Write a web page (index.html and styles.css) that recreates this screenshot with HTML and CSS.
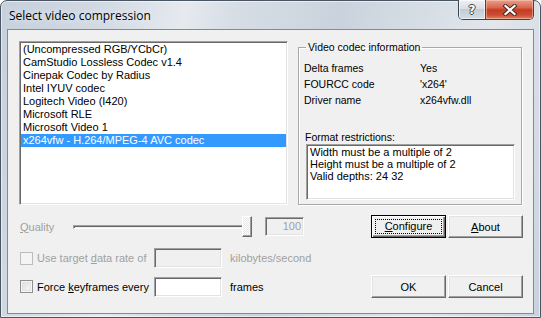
FILE: index.html
```html
<!DOCTYPE html>
<html>
  <head>
    <link rel="stylesheet" href="styles.css">
  </head>
  <body>
    <div class="window">
      <div class="titlebar">
        <span class="title">Select video compression</span>
        <div class="caption-btns">
          <div class="cap help"><span>?</span></div>
          <div class="cap close">
            <svg width="16" height="12" viewBox="0 0 16 12">
              <path d="M3.5 2 L12.5 10 M12.5 2 L3.5 10" stroke="#4a2a24" stroke-width="4.2" stroke-linecap="square"/>
              <path d="M3.5 2 L12.5 10 M12.5 2 L3.5 10" stroke="#fff" stroke-width="2.2" stroke-linecap="square"/>
            </svg>
          </div>
        </div>
      </div>

      <div class="client">
        <div class="top">
          <ul class="listbox sunken">
            <li>(Uncompressed RGB/YCbCr)</li>
            <li>CamStudio Lossless Codec v1.4</li>
            <li>Cinepak Codec by Radius</li>
            <li>Intel IYUV codec</li>
            <li>Logitech Video (I420)</li>
            <li>Microsoft RLE</li>
            <li>Microsoft Video 1</li>
            <li class="selected">x264vfw - H.264/MPEG-4 AVC codec</li>
          </ul>

          <fieldset class="group">
            <legend>Video codec information</legend>
            <div class="info">
              <span>Delta frames</span><span>Yes</span>
              <span>FOURCC code</span><span>'x264'</span>
              <span>Driver name</span><span>x264vfw.dll</span>
            </div>
            <div class="restr-label">Format restrictions:</div>
            <div class="restr-box sunken">
              Width must be a multiple of 2<br>
              Height must be a multiple of 2<br>
              Valid depths: 24 32
            </div>
          </fieldset>
        </div>

        <div class="row row-quality">
          <div class="left">
            <span class="quality-lbl disabled"><u>Q</u>uality</span>
            <div class="slider">
              <div class="track"></div>
              <div class="thumb"></div>
            </div>
            <div class="edit num sunken disabled">100</div>
          </div>
          <div class="btns">
            <button class="btn default"><span class="focus"><u>C</u>onfigure</span></button>
            <button class="btn"><u>A</u>bout</button>
          </div>
        </div>

        <div class="row row-rate">
          <div class="left">
            <label class="ck disabled"><span class="box"></span><span>Use target <u>d</u>ata rate of</span></label>
            <div class="edit sunken off"></div>
            <span class="unit disabled">kilobytes/second</span>
          </div>
        </div>

        <div class="row row-key">
          <div class="left">
            <label class="ck"><span class="box"></span><span>Force <u>k</u>eyframes every</span></label>
            <div class="edit sunken"></div>
            <span class="unit">frames</span>
          </div>
          <div class="btns">
            <button class="btn">OK</button>
            <button class="btn">Cancel</button>
          </div>
        </div>
      </div>
    </div>
  </body>
</html>
```

FILE: styles.css
```css
* {
  margin: 0;
  padding: 0;
  box-sizing: border-box;
}
body {
  width: 541px;
  height: 318px;
  overflow: hidden;
  background: #fff;
  font-family: "Liberation Sans", Arial, sans-serif;
  font-size: 11px;
  color: #000;
}
u {
  text-decoration: underline;
  text-underline-offset: 1px;
}

/* window frame */
.window {
  width: 541px;
  height: 318px;
  border: 1px solid #4a5563;
  border-radius: 7px 7px 0 0;
  padding: 0 6px 3px;
  display: flex;
  flex-direction: column;
  background: linear-gradient(105deg, #c6d0db 0%, #d3dbe4 18%, #e6eaef 30%, #d6dde5 38%, #cad3dd 55%, #d9e0e7 72%, #e3e7ec 80%, #c9d2dc 100%);
  box-shadow: inset 0 0 0 1px rgba(255, 255, 255, 0.55);
}
.titlebar {
  height: 28px;
  display: flex;
  align-items: flex-start;
}
.title {
  font-family: "Open Sans", sans-serif;
  font-size: 12px;
  line-height: 16px;
  margin: 7px 0 0 2px;
  text-shadow: 0 0 6px rgba(255, 255, 255, 0.9);
}
.caption-btns {
  margin-left: auto;
  margin-right: 0;
  margin-top: -1px;
  display: flex;
  height: 20px;
  border: 1px solid #3b4552;
  border-top: none;
  border-radius: 0 0 5px 5px;
  overflow: hidden;
}
.cap {
  display: flex;
  align-items: center;
  justify-content: center;
}
.help {
  width: 27px;
  border-right: 1px solid #3b4552;
  background: linear-gradient(#eef1f4, #d9dfe6 45%, #c3ccd6 50%, #d5dce4);
  box-shadow: inset 0 0 0 1px rgba(255, 255, 255, 0.6);
}
.help span {
  font-family: "DejaVu Sans", sans-serif;
  font-size: 12px;
  font-weight: bold;
  color: #fff;
  text-shadow: 1px 0 #3e4650, -1px 0 #3e4650, 0 1px #3e4650, 0 -1px #3e4650;
}
.close {
  width: 47px;
  background: linear-gradient(#eaa08c, #d8664f 40%, #c63b22 52%, #cc4e33 80%, #de8465);
  box-shadow: inset 0 0 0 1px rgba(255, 220, 200, 0.45);
}

/* client area */
.client {
  flex: 1;
  background: #f0f0f0;
  border: 1px solid #7f8b98;
  padding: 11px 10px 0 11px;
}
.sunken {
  border: 1px solid;
  border-color: #a0a0a0 #fff #fff #a0a0a0;
  box-shadow: inset 1px 1px #696969, inset -1px -1px #e3e3e3;
}
.disabled {
  color: #a0a0a0;
}

.top {
  display: flex;
  gap: 10px;
  height: 164px;
}
.listbox {
  width: 269px;
  background: #fff;
  list-style: none;
  padding: 1px;
}
.listbox li {
  height: 13px;
  line-height: 13px;
  padding-left: 2px;
  white-space: nowrap;
}
.listbox li.selected {
  background: #3399ff;
  color: #fff;
}

.group {
  flex: 1;
  margin-right: 1px;
  border: 1px solid #a9a9a9;
  box-shadow: inset 1px 1px #fff, 1px 1px #fff;
  padding: 0 6px 4px 5px;
  font-size: 10.5px;
}
.group legend {
  margin-left: 2px;
  padding: 0 2px;
  line-height: 13px;
}
.info {
  margin-top: 6px;
  display: grid;
  grid-template-columns: 116px auto;
  line-height: 16px;
}
.restr-label {
  margin: 23px 0 0 1px;
  line-height: 13px;
}
.restr-box {
  margin-left: 2px;
  height: 56px;
  background: #fff;
  padding: 1px 3px;
  line-height: 12px;
  font-size: 11px;
}

/* lower rows */
.row {
  display: flex;
  align-items: center;
  justify-content: space-between;
  padding-left: 1px;
}
.row-quality {
  margin-top: 10px;
  height: 23px;
}
.row-rate {
  margin-top: 10px;
  height: 20px;
}
.row-key {
  margin-top: 7px;
  height: 23px;
}
.left {
  display: flex;
  align-items: center;
}
.quality-lbl {
  width: 53px;
}
.slider {
  position: relative;
  width: 179px;
  height: 21px;
  display: flex;
  align-items: center;
}
.track {
  width: 175px;
  height: 4px;
  border: 1px solid;
  border-color: #a0a0a0 #fff #fff #a0a0a0;
  box-shadow: inset 1px 1px #696969;
  background: #f0f0f0;
}
.thumb {
  position: absolute;
  right: 0;
  top: 0;
  width: 10px;
  height: 21px;
  border: 1px solid;
  border-color: #fff #696969 #696969 #fff;
  box-shadow: inset -1px -1px #a0a0a0;
  background: repeating-conic-gradient(#fff 0 25%, #e6e6e6 0 50%) 0 0 / 2px 2px;
}
.edit {
  width: 68px;
  height: 20px;
  background: #fff;
}
.edit.off,
.edit.disabled {
  background: #f0f0f0;
}
.num {
  margin-left: 13px;
  width: 39px;
  height: 19px;
  text-align: right;
  padding-right: 2px;
  line-height: 17px;
}
.ck {
  width: 134px;
  display: flex;
  align-items: center;
  gap: 4px;
  white-space: nowrap;
}
.box {
  width: 13px;
  height: 13px;
  flex: none;
  border: 1px solid #8e8f8f;
  background: linear-gradient(135deg, #dcdcdc, #fbfbfb);
  box-shadow: inset 0 0 0 1px #f6f6f6, inset 0 0 0 2px #e2e2e2;
}
.ck.disabled .box {
  border-color: #bcbcbc;
  background: #f4f4f4;
  box-shadow: none;
}
.unit {
  margin-left: 8px;
}

.btns {
  display: flex;
  gap: 2px;
}
.btn {
  width: 75px;
  height: 23px;
  font-family: "Liberation Sans", Arial, sans-serif;
  font-size: 11px;
  color: #000;
  background: #f0f0f0;
  border: 1px solid;
  border-color: #fff #696969 #696969 #fff;
  box-shadow: inset -1px -1px #a0a0a0, inset 1px 1px #e3e3e3;
}
.btn.default {
  border-color: #000;
  box-shadow: inset 1px 1px #fff, inset -1px -1px #696969, inset -2px -2px #a0a0a0;
  padding: 3px;
  display: flex;
}
.focus {
  flex: 1;
  border: 1px dotted #000;
  line-height: 13px;
}
```
